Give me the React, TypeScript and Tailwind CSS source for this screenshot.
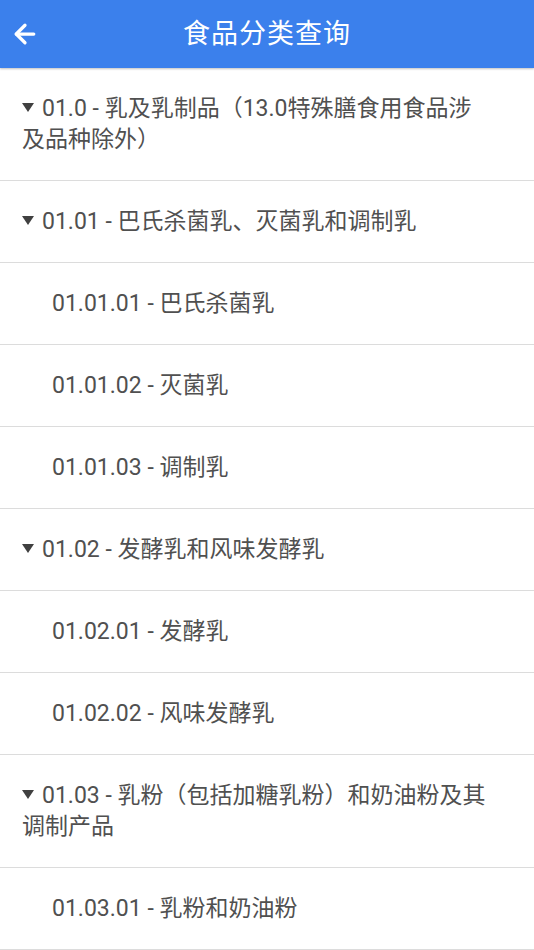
import { ArrowLeft } from "lucide-react";

type Row = { code: string; name: string; level: 0 | 1 };

const ROWS: Row[] = [
  { code: "01.0", name: "乳及乳制品（13.0特殊膳食用食品涉及品种除外）", level: 0 },
  { code: "01.01", name: "巴氏杀菌乳、灭菌乳和调制乳", level: 0 },
  { code: "01.01.01", name: "巴氏杀菌乳", level: 1 },
  { code: "01.01.02", name: "灭菌乳", level: 1 },
  { code: "01.01.03", name: "调制乳", level: 1 },
  { code: "01.02", name: "发酵乳和风味发酵乳", level: 0 },
  { code: "01.02.01", name: "发酵乳", level: 1 },
  { code: "01.02.02", name: "风味发酵乳", level: 1 },
  { code: "01.03", name: "乳粉（包括加糖乳粉）和奶油粉及其调制产品", level: 0 },
  { code: "01.03.01", name: "乳粉和奶油粉", level: 1 },
];

export default function App() {
  return (
    <div
      className="h-[950px] w-[534px] overflow-hidden bg-white"
      style={{ fontFamily: 'Roboto, "Noto Sans CJK SC", sans-serif' }}
    >
      <header className="relative flex h-[68px] items-center justify-center bg-[#3b80ec] shadow-[0_1px_2px_rgba(0,0,0,0.25)]">
        <ArrowLeft className="absolute left-[10px] top-[19px] h-[30px] w-[30px] text-white" strokeWidth={2.6} />
        <h1 className="text-[27px] font-normal tracking-[1px] text-white">食品分类查询</h1>
      </header>
      <ul>
        {ROWS.map((r) => (
          <li
            key={r.code}
            className={`border-b border-[#dcdcdc] py-[25px] pr-[44px] text-[23px] leading-[31px] text-[#505050] ${
              r.level === 0 ? "pl-[22px]" : "pl-[52px]"
            }`}
          >
            {r.level === 0 && (
              <svg viewBox="0 0 12 9" className="mr-[8px] inline-block h-[9px] w-[12px] align-[4px]" fill="#404040">
                <path d="M0 0h12L6 9z" />
              </svg>
            )}
            {r.code} - {r.name}
          </li>
        ))}
      </ul>
    </div>
  );
}
